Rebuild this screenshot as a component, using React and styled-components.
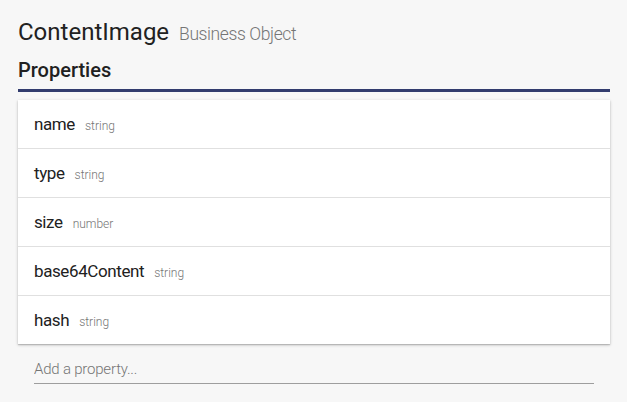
import React from "react";
import styled, { createGlobalStyle } from "styled-components";

const GlobalStyle = createGlobalStyle`
  html, body {
    margin: 0;
    padding: 0;
    background: #f7f7f7;
    font-family: Roboto, "Liberation Sans", sans-serif;
  }
`;

const Page = styled.div`
  padding: 18px 17px 20px 18px;
  width: 592px;
`;

const Header = styled.div`
  display: flex;
  align-items: baseline;
  gap: 10px;
  height: 34px;
`;

const Title = styled.h1`
  margin: 0;
  font-size: 24px;
  font-weight: 400;
  color: #212121;
`;

const Kind = styled.span`
  font-size: 17.5px;
  font-weight: 300;
  letter-spacing: -0.4px;
  color: #757575;
`;

const SectionTitle = styled.h2`
  margin: 6px 0 0;
  font-size: 20px;
  font-weight: 500;
  color: #212121;
  padding-bottom: 7px;
  border-bottom: 3px solid #323c6e;
`;

const Card = styled.div`
  margin-top: 8px;
  background: #fff;
  box-shadow: 0 1px 3px rgba(0, 0, 0, 0.22), 0 1px 1px rgba(0, 0, 0, 0.14);
`;

const Row = styled.div`
  display: flex;
  align-items: baseline;
  gap: 10px;
  height: 48px;
  line-height: 48px;
  padding: 0 16px;
  border-top: ${({ $first }) => ($first ? "none" : "1px solid #e0e0e0")};
`;

const PropName = styled.span`
  font-size: 17px;
  letter-spacing: -0.4px;
  color: #212121;
`;

const PropType = styled.span`
  font-size: 12px;
  font-weight: 300;
  color: #757575;
`;

const InputWrap = styled.div`
  padding: 0 16px;
  margin-top: 14px;
`;

const Input = styled.input`
  width: 100%;
  box-sizing: border-box;
  border: none;
  border-bottom: 1px solid #9e9e9e;
  background: transparent;
  font-family: inherit;
  font-size: 15px;
  letter-spacing: -0.2px;
  padding: 2px 0 5px;
  color: #212121;
  outline: none;

  &::placeholder {
    color: #757575;
    font-weight: 300;
  }
`;

const properties = [
  { name: "name", type: "string" },
  { name: "type", type: "string" },
  { name: "size", type: "number" },
  { name: "base64Content", type: "string" },
  { name: "hash", type: "string" },
];

export default function App() {
  return (
    <Page>
      <GlobalStyle />
      <Header>
        <Title>ContentImage</Title>
        <Kind>Business Object</Kind>
      </Header>
      <SectionTitle>Properties</SectionTitle>
      <Card>
        {properties.map((p, i) => (
          <Row key={p.name} $first={i === 0}>
            <PropName>{p.name}</PropName>
            <PropType>{p.type}</PropType>
          </Row>
        ))}
      </Card>
      <InputWrap>
        <Input placeholder="Add a property..." />
      </InputWrap>
    </Page>
  );
}
